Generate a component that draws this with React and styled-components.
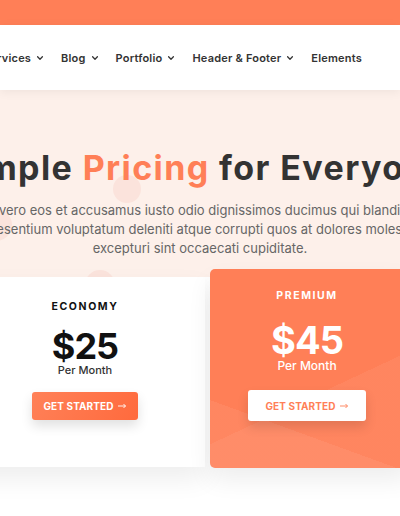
import React from "react"
import styled, { createGlobalStyle } from "styled-components"

const orange = "#ff7f57"
const font = `"Inter", "Open Sans", "DejaVu Sans", sans-serif`

const GlobalStyle = createGlobalStyle`
  html, body {
    margin: 0;
    padding: 0;
    background: #ffffff;
  }
  * {
    box-sizing: border-box;
  }
`

const Page = styled.div`
  width: 400px;
  height: 516px;
  overflow: hidden;
  font-family: ${font};
  background: #ffffff;
`

const TopBar = styled.div`
  height: 25px;
  background: ${orange};
`

const NavBar = styled.header`
  position: relative;
  z-index: 2;
  height: 65px;
  display: flex;
  align-items: center;
  background: #ffffff;
  box-shadow: 0 2px 10px rgba(0, 0, 0, 0.06);
`

const Nav = styled.nav`
  display: flex;
  align-items: center;
  gap: 17px;
  margin-left: -17px;
  white-space: nowrap;
`

const NavItem = styled.a`
  display: flex;
  align-items: center;
  gap: 5px;
  color: #333333;
  font-size: 11px;
  font-weight: 600;
  letter-spacing: 0.2px;
  text-decoration: none;
`

const Hero = styled.section`
  position: relative;
  height: 187px;
  padding-top: 58px;
  overflow: hidden;
  background: #fdf0ea;
  display: flex;
  flex-direction: column;
  align-items: center;
`

const Blob = styled.span`
  position: absolute;
  border-radius: 50%;
  background: #fbe3dc;
  left: ${(p) => p.x - p.r}px;
  top: ${(p) => p.y - p.r}px;
  width: ${(p) => p.r * 2}px;
  height: ${(p) => p.r * 2}px;
`

const Title = styled.h1`
  position: relative;
  margin: 0;
  font-size: 34px;
  line-height: 40px;
  font-weight: 700;
  color: #333333;
  white-space: nowrap;
  letter-spacing: 1.4px;

  span {
    color: ${orange};
  }
`

const Lead = styled.p`
  position: relative;
  margin: 13px 0 0;
  color: #666666;
  font-size: 13px;
  line-height: 19px;
  text-align: center;
  white-space: nowrap;

  span {
    display: block;
  }
`

const CardsRow = styled.section`
  display: flex;
  align-items: flex-start;
  gap: 5px;
  margin-left: -35px;
  height: 209px;
`

const Card = styled.div`
  position: relative;
  flex: none;
  display: flex;
  flex-direction: column;
  align-items: center;
  width: ${(p) => (p.featured ? 200 : 240)}px;
  height: ${(p) => (p.featured ? 199 : 190)}px;
  margin-top: ${(p) => (p.featured ? -8 : 0)}px;
  padding-top: ${(p) => (p.featured ? 20 : 23)}px;
  padding-right: ${(p) => (p.featured ? 6 : 0)}px;
  border-radius: ${(p) => (p.featured ? 5 : 0)}px;
  color: ${(p) => (p.featured ? "#ffffff" : "#111111")};
  background: ${(p) =>
    p.featured
      ? `linear-gradient(155deg, rgba(255,255,255,0) 60%, rgba(255,255,255,0.05) 60%),
         linear-gradient(20deg, rgba(255,255,255,0.06) 25%, rgba(255,255,255,0) 25%),
         ${orange}`
      : "#ffffff"};
  box-shadow: 0 12px 24px rgba(0, 0, 0, 0.07);
  z-index: ${(p) => (p.featured ? 1 : 0)};
`

const Plan = styled.div`
  font-size: 10.5px;
  line-height: 14px;
  font-weight: 700;
  letter-spacing: 1.6px;
`

const Price = styled.div`
  margin-top: ${(p) => (p.featured ? 17 : 14)}px;
  font-size: ${(p) => (p.featured ? 38 : 36)}px;
  line-height: ${(p) => (p.featured ? 40 : 36)}px;
  font-weight: 700;
  letter-spacing: -1px;
`

const Period = styled.div`
  margin-top: -1px;
  font-size: ${(p) => (p.featured ? 12 : 11)}px;
  line-height: 14px;
  font-weight: 500;
  color: ${(p) => (p.featured ? "#ffffff" : "#333333")};
`

const Button = styled.a`
  display: flex;
  align-items: center;
  justify-content: center;
  gap: 4px;
  margin-top: ${(p) => (p.featured ? 17 : 15)}px;
  width: ${(p) => (p.featured ? 118 : 106)}px;
  height: ${(p) => (p.featured ? 31 : 28)}px;
  border-radius: 3px;
  font-size: 10px;
  font-weight: 700;
  letter-spacing: 0.1px;
  text-decoration: none;
  color: ${(p) => (p.featured ? orange : "#ffffff")};
  background: ${(p) =>
    p.featured ? "#ffffff" : `linear-gradient(120deg, #ff8158, #ff6a3d)`};
  box-shadow: 0 6px 12px rgba(0, 0, 0, 0.12);
`

const Features = styled.section`
  display: flex;
  gap: 198px;
  margin-left: 73px;
  margin-top: 40px;
`

const Dot = styled.span`
  width: 24px;
  height: 24px;
  border-radius: 50%;
  background: ${orange};
`

const Chevron = () => (
  <svg width="8" height="8" viewBox="0 0 10 10" fill="none">
    <path d="M2 3.5 5 6.5 8 3.5" stroke="#333" strokeWidth="1.6" strokeLinecap="round" strokeLinejoin="round" />
  </svg>
)

const Arrow = () => (
  <svg width="9" height="6" viewBox="0 0 9 6" fill="none">
    <path d="M0 3h7.5M5.5 1l2 2-2 2" stroke="currentColor" strokeWidth="0.9" />
  </svg>
)

const navItems = [
  { label: "Services", menu: true },
  { label: "Blog", menu: true },
  { label: "Portfolio", menu: true },
  { label: "Header & Footer", menu: true },
  { label: "Elements", menu: false },
]

const plans = [
  { name: "ECONOMY", price: "$25", featured: false },
  { name: "PREMIUM", price: "$45", featured: true },
]

const App = () => {
  return (
    <Page>
      <GlobalStyle />
      <TopBar />
      <NavBar>
        <Nav>
          {navItems.map((item) => (
            <NavItem key={item.label} href="#">
              {item.label}
              {item.menu && <Chevron />}
            </NavItem>
          ))}
        </Nav>
      </NavBar>
      <Hero>
        <Blob x={127} y={99} r={14} />
        <Blob x={-4} y={135} r={16} />
        <Blob x={100} y={195} r={15} />
        <Title>
          Simple <span>Pricing</span> for Everyone
        </Title>
        <Lead>
          <span>At vero eos et accusamus iusto odio dignissimos ducimus qui blanditiis</span>
          <span>praesentium voluptatum deleniti atque corrupti quos at dolores molestias</span>
          <span>excepturi sint occaecati cupiditate.</span>
        </Lead>
      </Hero>
      <CardsRow>
        {plans.map((plan) => (
          <Card key={plan.name} featured={plan.featured}>
            <Plan>{plan.name}</Plan>
            <Price featured={plan.featured}>{plan.price}</Price>
            <Period featured={plan.featured}>Per Month</Period>
            <Button href="#" featured={plan.featured}>
              GET STARTED <Arrow />
            </Button>
          </Card>
        ))}
      </CardsRow>
      <Features>
        <Dot />
        <Dot />
      </Features>
    </Page>
  )
}

export default App
